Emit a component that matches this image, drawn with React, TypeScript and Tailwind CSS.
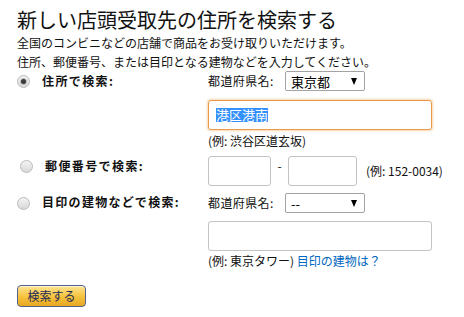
import React from "react";

const font = { fontFamily: '"Noto Sans CJK JP", "Noto Sans", sans-serif' };

function Radio({ checked }: { checked?: boolean }) {
  return (
    <div className="w-[13px] h-[13px] rounded-full border border-[#b9b9b9] bg-gradient-to-b from-[#f4f4f4] to-[#d9d9d9] flex items-center justify-center shrink-0">
      {checked && (
        <div className="w-[7px] h-[7px] rounded-full bg-[#bdbdbd] flex items-center justify-center">
          <div className="w-[5px] h-[5px] rounded-full bg-[#3c3c3c]" />
        </div>
      )}
    </div>
  );
}

function Select({ value }: { value: string }) {
  return (
    <div className="w-[80px] h-[20px] border border-[#a3a3a3] rounded-[2px] bg-white flex items-center justify-between pl-[5px] pr-[7px]">
      <span className="text-[13px] leading-none text-black">{value}</span>
      <span className="w-0 h-0 border-l-[3.5px] border-r-[3.5px] border-t-[7px] border-l-transparent border-r-transparent border-t-black" />
    </div>
  );
}

export default function App() {
  return (
    <div className="w-[464px] h-[317px] bg-white text-[#111] pl-[17px] pt-[8px]" style={font}>
      <div className="text-[20px] leading-[24px]">新しい店頭受取先の住所を検索する</div>
      <div className="mt-[1px] text-[12px] leading-[19px]">全国のコンビニなどの店舗で商品をお受け取りいただけます。</div>
      <div className="text-[12px] leading-[19px]">住所、郵便番号、または目印となる建物などを入力してください。</div>

      {/* Section 1 */}
      <div className="flex">
        <div className="w-[191px] h-[20px] flex items-center">
          <Radio checked />
          <span className="ml-[12px] text-[12px] font-bold tracking-[1.4px]">住所で検索:</span>
        </div>
        <div className="flex flex-col">
          <div className="flex items-center h-[20px]">
            <span className="text-[12px] tracking-[0.4px] w-[77px]">都道府県名:</span>
            <Select value="東京都" />
          </div>
          <div className="mt-[9px] w-[224px] h-[30px] border border-[#e8994a] rounded-[3px] shadow-[0_0_2px_1px_rgba(240,160,80,0.45)] flex items-center pl-[7px]">
            <span className="text-[13px] leading-[14px] bg-[#3390ff] text-white">港区港南</span>
          </div>
          <div className="mt-[3px] text-[12px] leading-[16px]">(例: 渋谷区道玄坂)</div>
        </div>
      </div>

      {/* Section 2 */}
      <div className="flex mt-[7px]">
        <div className="w-[191px] flex items-center h-[20px] pl-[3px]">
          <Radio />
          <span className="ml-[12px] text-[12px] font-bold tracking-[1.4px]">郵便番号で検索:</span>
        </div>
        <div className="flex items-center h-[30px]">
          <div className="w-[63px] h-[30px] border border-[#c3c3c3] rounded-[3px]" />
          <span className="text-[12px] w-[17px] text-center -mt-[10px]">-</span>
          <div className="w-[69px] h-[30px] border border-[#c3c3c3] rounded-[3px]" />
          <span className="ml-[9px] text-[12px]">(例: 152-0034)</span>
        </div>
      </div>

      {/* Section 3 */}
      <div className="flex mt-[7px]">
        <div className="w-[191px] h-[20px] flex items-center">
          <Radio />
          <span className="ml-[12px] text-[12px] font-bold tracking-[1.3px] -mt-[2px]">目印の建物などで検索:</span>
        </div>
        <div className="flex flex-col">
          <div className="flex items-center h-[20px]">
            <span className="text-[12px] tracking-[0.4px] w-[77px]">都道府県名:</span>
            <Select value="--" />
          </div>
          <div className="mt-[8px] w-[224px] h-[30px] border border-[#c3c3c3] rounded-[3px]" />
          <div className="mt-[2px] text-[12px] leading-[16px]">
            (例: 東京タワー) <span className="text-[#0066c0]">目印の建物は？</span>
          </div>
        </div>
      </div>

      <button
        className="mt-[16px] w-[69px] h-[22px] rounded-[4px] border border-[#52608a] bg-gradient-to-b from-[#fde58f] via-[#f6c440] to-[#e9a71f] shadow-[inset_0_1px_0_rgba(255,255,255,0.6)] text-[12px] text-[#1b2a55] flex items-center justify-center"
        style={font}
      >
        検索する
      </button>
    </div>
  );
}
